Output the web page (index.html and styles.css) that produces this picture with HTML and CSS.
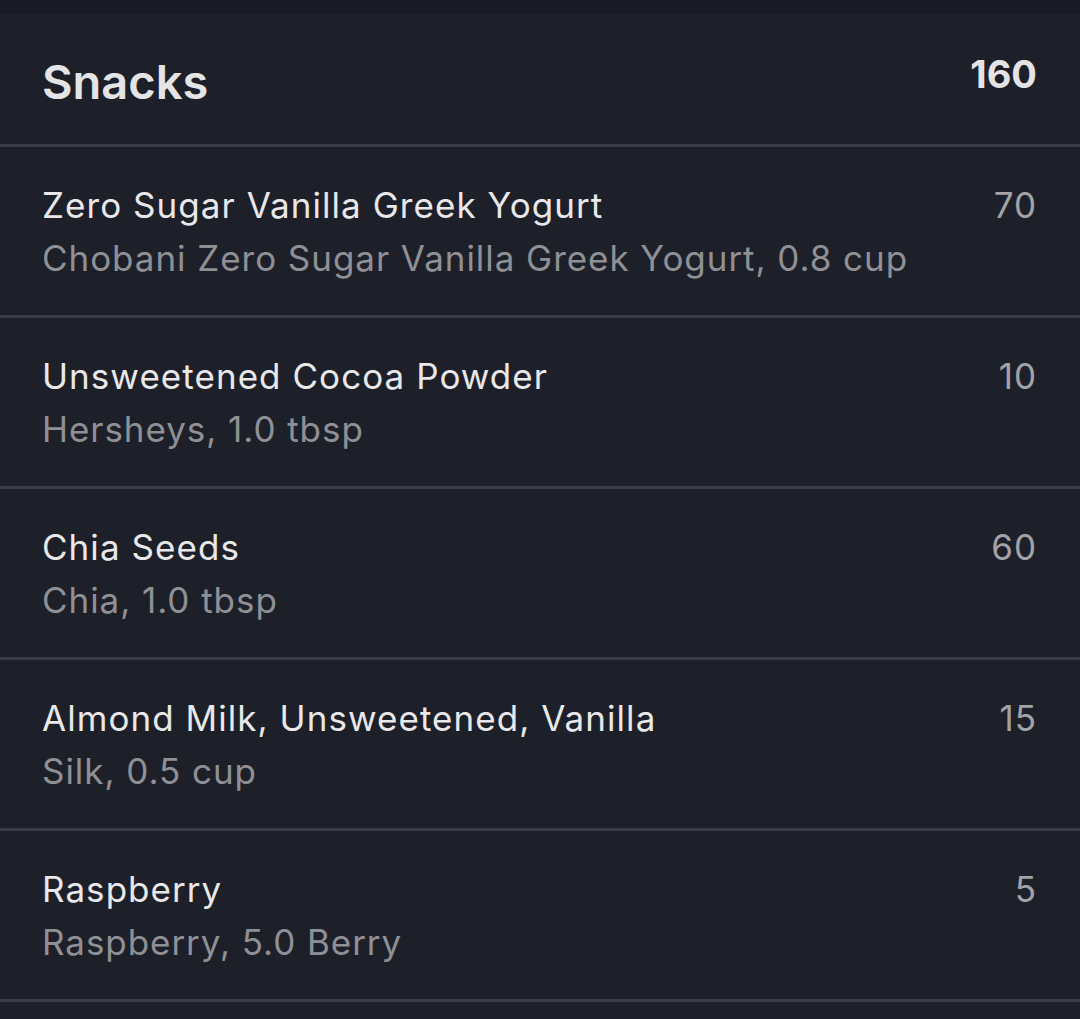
FILE: index.html
```html
<!DOCTYPE html>
<html>
<head>
<meta charset="utf-8">
<link rel="stylesheet" href="styles.css">
</head>
<body>
<div class="topbar"></div>
<section class="meal">
  <header class="meal-head">
    <h2 class="meal-title">Snacks</h2>
    <span class="meal-total">160</span>
  </header>
  <ul class="items">
    <li class="item">
      <div class="item-text">
        <div class="item-name">Zero Sugar Vanilla Greek Yogurt</div>
        <div class="item-detail">Chobani Zero Sugar Vanilla Greek Yogurt, 0.8 cup</div>
      </div>
      <span class="item-cal">70</span>
    </li>
    <li class="item">
      <div class="item-text">
        <div class="item-name">Unsweetened Cocoa Powder</div>
        <div class="item-detail">Hersheys, 1.0 tbsp</div>
      </div>
      <span class="item-cal">10</span>
    </li>
    <li class="item">
      <div class="item-text">
        <div class="item-name">Chia Seeds</div>
        <div class="item-detail">Chia, 1.0 tbsp</div>
      </div>
      <span class="item-cal">60</span>
    </li>
    <li class="item">
      <div class="item-text">
        <div class="item-name">Almond Milk, Unsweetened, Vanilla</div>
        <div class="item-detail">Silk, 0.5 cup</div>
      </div>
      <span class="item-cal">15</span>
    </li>
    <li class="item">
      <div class="item-text">
        <div class="item-name">Raspberry</div>
        <div class="item-detail">Raspberry, 5.0 Berry</div>
      </div>
      <span class="item-cal">5</span>
    </li>
  </ul>
</section>
</body>
</html>
```
FILE: styles.css
```css
html, body {
  margin: 0;
  padding: 0;
  background: #1e2029;
  font-family: Inter, "Noto Sans", sans-serif;
  color: #e6e6e8;
}
.topbar {
  height: 14px;
  background: #181a24;
}
.meal {
  background: #1e2029;
}
.meal-head {
  display: flex;
  justify-content: space-between;
  align-items: flex-start;
  padding: 0 43px 0 42px;
  border-bottom: 3px solid #3a3c45;
  box-sizing: border-box;
  height: 133px;
}
.meal-title {
  margin: 0;
  padding-top: 40px;
  font-size: 47px;
  font-weight: 600;
  line-height: 56px;
  color: #e4e4e6;
}
.meal-total {
  padding-top: 38px;
  font-size: 38px;
  font-weight: 700;
  line-height: 44px;
  color: #e4e4e6;
}
.items {
  list-style: none;
  margin: 0;
  padding: 0;
}
.item {
  display: flex;
  justify-content: space-between;
  align-items: flex-start;
  height: 171px;
  box-sizing: border-box;
  padding: 35px 43px 0 42px;
  border-bottom: 3px solid #3a3c45;
}
.item-name {
  font-size: 35px;
  line-height: 46px;
  letter-spacing: 1.05px;
  color: #e8e8ea;
}
.item-detail {
  font-size: 35px;
  line-height: 46px;
  letter-spacing: 0.95px;
  margin-top: 7px;
  color: #8f9096;
}
.item-cal {
  font-size: 35px;
  line-height: 46px;
  letter-spacing: 1px;
  color: #a2a3a8;
}
```
